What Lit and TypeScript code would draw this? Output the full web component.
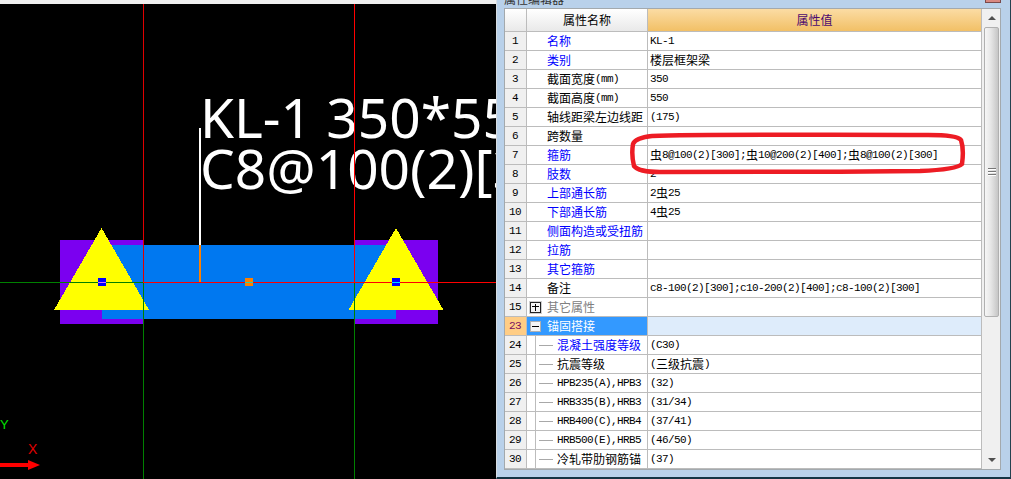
import { LitElement, html, css, svg, nothing } from "lit";
import { customElement } from "lit/decorators.js";

type Row = {
  n: number;
  name: string;
  value?: string;
  blue?: boolean;
  tree?: boolean;
  expand?: "plus" | "minus";
  muted?: boolean;
  selected?: boolean;
};

const BAR = "\u866B";
const ROWS: Row[] = [
  { n: 1, name: "名称", value: "KL-1", blue: true },
  { n: 2, name: "类别", value: "楼层框架梁", blue: true },
  { n: 3, name: "截面宽度(mm)", value: "350" },
  { n: 4, name: "截面高度(mm)", value: "550" },
  { n: 5, name: "轴线距梁左边线距", value: "(175)" },
  { n: 6, name: "跨数量" },
  { n: 7, name: "箍筋", value: `${BAR}8@100(2)[300];${BAR}10@200(2)[400];${BAR}8@100(2)[300]`, blue: true },
  { n: 8, name: "肢数", value: "2", blue: true },
  { n: 9, name: "上部通长筋", value: `2${BAR}25`, blue: true },
  { n: 10, name: "下部通长筋", value: `4${BAR}25`, blue: true },
  { n: 11, name: "侧面构造或受扭筋", blue: true },
  { n: 12, name: "拉筋", blue: true },
  { n: 13, name: "其它箍筋", blue: true },
  { n: 14, name: "备注", value: "c8-100(2)[300];c10-200(2)[400];c8-100(2)[300]" },
  { n: 15, name: "其它属性", expand: "plus", muted: true },
  { n: 23, name: "锚固搭接", expand: "minus", selected: true },
  { n: 24, name: "混凝土强度等级", value: "(C30)", tree: true, blue: true },
  { n: 25, name: "抗震等级", value: "(三级抗震)", tree: true },
  { n: 26, name: "HPB235(A),HPB3", value: "(32)", tree: true },
  { n: 27, name: "HRB335(B),HRB3", value: "(31/34)", tree: true },
  { n: 28, name: "HRB400(C),HRB4", value: "(37/41)", tree: true },
  { n: 29, name: "HRB500(E),HRB5", value: "(46/50)", tree: true },
  { n: 30, name: "冷轧带肋钢筋锚", value: "(37)", tree: true },
];

/** Latin runs get the narrow half-width face, CJK runs keep the full-width one. */
function runs(text: string) {
  return text
    .split(/([\x00-\x7f]+)/)
    .filter((p) => p.length)
    .map((p) => (/^[\x00-\x7f]/.test(p) ? html`<span class="lat">${p}</span>` : html`<span>${p}</span>`));
}

function triangle(cx: number) {
  return svg`<polygon points="${cx},228 ${cx - 47.5},310 ${cx + 47.5},310" fill="#ffff00"></polygon>`;
}

@customElement("app-root")
export class AppRoot extends LitElement {
  static styles = css`
    :host {
      display: flex;
      width: 1011px;
      height: 479px;
      overflow: hidden;
      background: #000;
    }
    .canvas {
      width: 496px;
      height: 479px;
      flex: none;
      display: block;
    }
    .cad-text {
      font-family: "Noto Sans", sans-serif;
      font-size: 55px;
      fill: #fff;
    }
    .axis {
      font-family: "Liberation Sans", sans-serif;
    }
    .dialog {
      flex: none;
      display: flex;
      flex-direction: column;
      padding: 0 9px 7px 7px;
      background: #b9d1ea;
      border-left: 1px solid #d8dde2;
      border-right: 1px solid #24414f;
      border-bottom: 2px solid #143444;
      box-sizing: border-box;
      width: 515px;
      height: 479px;
      font-family: "Noto Sans CJK SC", sans-serif;
      font-size: 12px;
      color: #000;
    }
    .title {
      height: 8px;
      flex: none;
      overflow: hidden;
      display: flex;
      justify-content: space-between;
      align-items: flex-start;
    }
    .title-text {
      margin-top: -8px;
      line-height: 14px;
      color: #333;
    }
    .close {
      width: 14px;
      height: 2px;
      background: #d98880;
      border: 1px solid #7a4a4a;
      border-top: none;
    }
    .panel {
      position: relative;
      flex: none;
      height: 462px;
      box-sizing: border-box;
      border: 1px solid #a3a9ad;
      display: flex;
      background: #fff;
    }
    .table {
      width: 477px;
      flex: none;
      display: flex;
      flex-direction: column;
    }
    .row,
    .head {
      display: grid;
      grid-template-columns: 22px 121px 334px;
      height: 19px;
    }
    .head {
      height: 23px;
    }
    .cell {
      box-sizing: border-box;
      border-right: 1px solid #bcbcbc;
      border-bottom: 1px solid #bcbcbc;
      display: flex;
      align-items: center;
      white-space: nowrap;
      overflow: hidden;
      line-height: 1;
    }
    .head .cell {
      justify-content: center;
      background: linear-gradient(#ffffff, #e9e9e9);
    }
    .head .val {
      background: linear-gradient(#fbdca4, #f2c066);
      color: #4b0a70;
    }
    .idx {
      justify-content: center;
      background: #f0f0f0;
      padding-right: 1px;
    }
    .idx.sel {
      background: #ffcd85;
      color: #7a1060;
    }
    .name {
      padding-left: 20px;
    }
    .name.with-box {
      padding-left: 3px;
    }
    .name.with-tree {
      padding-left: 8px;
    }
    .name.blue {
      color: #0000ff;
    }
    .name.muted {
      color: #808080;
    }
    .name.sel {
      background: #3399ff;
      color: #fff;
    }
    .value {
      padding-left: 2px;
    }
    .value.sel {
      background: #deecfb;
    }
    .lat {
      font-family: "Liberation Mono", monospace;
      font-size: 11px;
      letter-spacing: -0.6px;
    }
    .box {
      position: relative;
      width: 11px;
      height: 11px;
      flex: none;
      box-sizing: border-box;
      border: 1px solid #b0b0b0;
      background: #f4f4f4;
      margin-right: 6px;
    }
    .box.plus {
      border: 1px solid #222;
      outline: 1px solid #cfcfcf;
      outline-offset: 0;
    }
    .box::before {
      content: "";
      position: absolute;
      left: 1px;
      right: 1px;
      top: 4px;
      height: 1px;
      background: #000;
    }
    .box.plus::before {
      top: 3.5px;
    }
    .box.plus::after {
      content: "";
      position: absolute;
      top: 1px;
      bottom: 1px;
      left: 3.5px;
      width: 1px;
      background: #000;
    }
    .tree {
      align-self: stretch;
      flex: none;
      width: 22px;
      box-sizing: border-box;
      border-left: 1px solid #bcbcbc;
      padding-left: 3px;
      display: flex;
      align-items: center;
    }
    .tree::after {
      content: "";
      width: 14px;
      height: 1px;
      background: #a8a8a8;
    }
    .scroll {
      flex: 1;
      display: flex;
      flex-direction: column;
      background: #f0f0f0;
      padding: 0 1px 0 2px;
    }
    .btn {
      height: 18px;
      flex: none;
      display: flex;
      align-items: center;
      justify-content: center;
    }
    .up {
      width: 0;
      height: 0;
      border-left: 4px solid transparent;
      border-right: 4px solid transparent;
      border-bottom: 4px solid #505050;
    }
    .down {
      width: 0;
      height: 0;
      border-left: 4px solid transparent;
      border-right: 4px solid transparent;
      border-top: 4px solid #505050;
    }
    .thumb {
      height: 290px;
      flex: none;
      box-sizing: border-box;
      border: 1px solid #b0b0b0;
      border-radius: 2px;
      background: linear-gradient(90deg, #f6f6f6, #e6e6e6 45%, #c6c6c6);
      display: flex;
      flex-direction: column;
      align-items: center;
      justify-content: center;
      gap: 1px;
    }
    .thumb i {
      display: block;
      width: 8px;
      height: 1px;
      background: #777;
      box-shadow: 0 1px 0 #fff;
      margin-bottom: 1px;
    }
    .track {
      flex: 1;
    }
    .mark {
      position: absolute;
      left: 120px;
      top: 120px;
      width: 345px;
      height: 56px;
      pointer-events: none;
    }
  `;

  private canvas() {
    return html`<svg class="canvas" viewBox="0 0 496 479" shape-rendering="crispEdges">
      <rect x="0" y="0" width="496" height="479" fill="#000"></rect>
      <rect x="0" y="0" width="496" height="4" fill="#f0f0f0"></rect>
      <rect x="60" y="240" width="84" height="84" fill="#7b00f0"></rect>
      <rect x="355" y="240" width="83" height="84" fill="#7b00f0"></rect>
      <rect x="102" y="245" width="294" height="74" fill="#0078f0"></rect>
      ${triangle(101.5)} ${triangle(396)}
      <rect x="98" y="278" width="8" height="8" fill="#0000ff"></rect>
      <rect x="392" y="278" width="8" height="8" fill="#0000ff"></rect>
      <rect x="245" y="278" width="8" height="8" fill="#ff8000"></rect>
      <text class="cad-text" x="200" y="138" shape-rendering="auto">KL-1 350*55</text>
      <text class="cad-text" x="200" y="189" shape-rendering="auto">C8@100(2)[3</text>
      <rect x="199" y="128" width="2" height="117" fill="#ffffff"></rect>
      <rect x="199" y="245" width="2" height="37" fill="#ff8000"></rect>
      <rect x="143" y="4" width="1" height="278" fill="#e00000"></rect>
      <rect x="143" y="282" width="1" height="197" fill="#008000"></rect>
      <rect x="354" y="4" width="1" height="278" fill="#ff0000"></rect>
      <rect x="354" y="282" width="1" height="197" fill="#008000"></rect>
      <rect x="0" y="282" width="143" height="1" fill="#008000"></rect>
      <rect x="143" y="282" width="353" height="1" fill="#ff0000"></rect>
      <rect x="98" y="282" width="8" height="1" fill="#d070ff"></rect>
      <rect x="392" y="282" width="8" height="1" fill="#00e0ff"></rect>
      <rect x="245" y="282" width="8" height="1" fill="#30d0a0"></rect>
      <text class="axis" x="0" y="429" font-size="13" fill="#00e000" shape-rendering="auto">Y</text>
      <text class="axis" x="28" y="454" font-size="14" fill="#e00000" shape-rendering="auto">X</text>
      <rect x="0" y="463" width="28" height="4" fill="#ff0000"></rect>
      <polygon points="28,460 40,465 28,470" fill="#ff0000" shape-rendering="auto"></polygon>
    </svg>`;
  }

  private row(r: Row) {
    const nameCls = [
      "cell name",
      r.blue ? "blue" : "",
      r.muted ? "muted" : "",
      r.selected ? "sel" : "",
      r.expand ? "with-box" : "",
      r.tree ? "with-tree" : "",
    ].join(" ");
    return html`<div class="row">
      <div class="cell idx ${r.selected ? "sel" : ""}"><span class="lat">${r.n}</span></div>
      <div class=${nameCls}>
        ${r.expand ? html`<span class="box ${r.expand}"></span>` : nothing}
        ${r.tree ? html`<span class="tree"></span>` : nothing}
        ${runs(r.name)}
      </div>
      <div class="cell value ${r.selected ? "sel" : ""}">${r.value ? runs(r.value) : nothing}</div>
    </div>`;
  }

  render() {
    return html`
      ${this.canvas()}
      <div class="dialog">
        <div class="title">
          <span class="title-text">属性编辑器</span>
          <span class="close"></span>
        </div>
        <div class="panel">
          <div class="table">
            <div class="head">
              <div class="cell"></div>
              <div class="cell">属性名称</div>
              <div class="cell val">属性值</div>
            </div>
            ${ROWS.map((r) => this.row(r))}
          </div>
          <div class="scroll">
            <div class="btn"><span class="up"></span></div>
            <div class="thumb"><i></i><i></i><i></i></div>
            <div class="track"></div>
            <div class="btn"><span class="down"></span></div>
          </div>
          <svg class="mark" viewBox="625 129 345 56">
            <path
              d="M634 166 C632 158 632 150 633 144 C635 139 642 137 652 136 C700 134 800 135 928 135 C945 135 958 136 961 140 C963 146 963 157 962 164 C958 168 945 170 920 171 C830 172 720 172 660 172 C648 172 638 171 634 166 Z"
              fill="none"
              stroke="#ed1c24"
              stroke-width="4.5"
            ></path>
          </svg>
        </div>
      </div>
    `;
  }
}
